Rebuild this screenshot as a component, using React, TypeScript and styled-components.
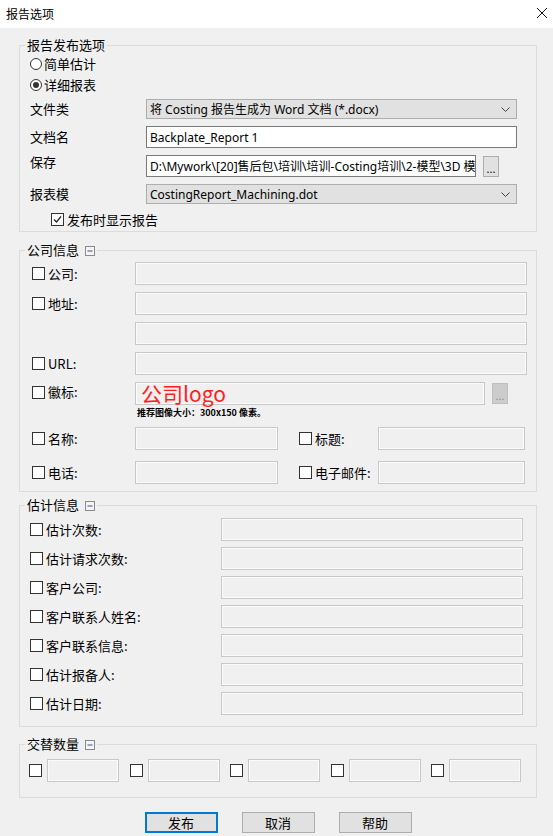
import React from 'react';
import styled, { createGlobalStyle } from 'styled-components';

const UI_FONT = `"Microsoft YaHei", "Noto Sans CJK SC", sans-serif`;
const FIELD_FONT = `"Segoe UI", "Noto Sans", "Noto Sans CJK SC", sans-serif`;

const GlobalStyle = createGlobalStyle`
  html, body {
    margin: 0;
    padding: 0;
    background: #f0f0f0;
  }
  * {
    box-sizing: border-box;
  }
`;

const COMPANY_ROWS = ['公司:', '地址:', '', 'URL:'];
const ESTIMATE_ROWS = ['估计次数:', '估计请求次数:', '客户公司:', '客户联系人姓名:', '客户联系信息:', '估计报备人:', '估计日期:'];
const ALT_COUNT = [0, 1, 2, 3, 4];

const CollapseIcon = () => (
  <svg width="10" height="10" viewBox="0 0 10 10">
    <rect x="0.5" y="0.5" width="9" height="9" fill="#f4f4f4" stroke="#8a8a8a" />
    <line x1="2.5" y1="5" x2="7.5" y2="5" stroke="#3452a4" />
  </svg>
);

const Chevron = () => (
  <svg width="9" height="5" viewBox="0 0 9 5">
    <path d="M0.5 0.5 L4.5 4.5 L8.5 0.5" fill="none" stroke="#444" />
  </svg>
);

const CheckBox = ({ checked }: { checked?: boolean }) => (
  <Check>
    {checked && (
      <svg width="11" height="11" viewBox="0 0 11 11">
        <path d="M2 5.5 L4.5 8 L9 2.5" fill="none" stroke="#222" strokeWidth="1.2" />
      </svg>
    )}
  </Check>
);

const App = () => {
  return (
    <Window>
      <GlobalStyle />
      <TitleBar>
        <span>报告选项</span>
        <svg width="10" height="10" viewBox="0 0 10 10">
          <path d="M0 0 L10 10 M10 0 L0 10" stroke="#111" strokeWidth="1" />
        </svg>
      </TitleBar>

      <Content>
        <Group>
          <Legend>报告发布选项</Legend>
          <Body $pad="0 19px 2px 10px">
            <OptionRow>
              <Radio />
              简单估计
            </OptionRow>
            <OptionRow>
              <Radio $checked />
              详细报表
            </OptionRow>

            <FormGrid>
              <Label>文件类</Label>
              <Select>
                <span>将 Costing 报告生成为 Word 文档 (*.docx)</span>
                <Chevron />
              </Select>

              <Label>文档名</Label>
              <TextBox>Backplate_Report 1</TextBox>

              <Label $top>保存</Label>
              <BrowseLine $right={18}>
                <TextBox>D:\Mywork\[20]售后包\培训\培训-Costing培训\2-模型\3D 模</TextBox>
                <Browse>...</Browse>
              </BrowseLine>

              <Label>报表模</Label>
              <Select>
                <span>CostingReport_Machining.dot</span>
                <Chevron />
              </Select>
            </FormGrid>

            <ShowRow>
              <CheckBox checked />
              发布时显示报告
            </ShowRow>
          </Body>
        </Group>

        <Group $mt={10}>
          <Legend>
            公司信息 <CollapseIcon />
          </Legend>
          <Body $pad="4px 9px 7px 12px">
            {COMPANY_ROWS.map((label, i) => (
              <FieldRow key={i} $labelWidth={103} $h={23}>
                {label ? (
                  <CheckLabel>
                    <CheckBox />
                    {label}
                  </CheckLabel>
                ) : (
                  <span />
                )}
                <Disabled />
              </FieldRow>
            ))}

            <FieldRow $labelWidth={103} $align="start">
              <CheckLabel $pt={2}>
                <CheckBox />
                徽标:
              </CheckLabel>
              <div>
                <BrowseLine $right={19}>
                  <Disabled>
                    <LogoText>公司logo</LogoText>
                  </Disabled>
                  <Browse $disabled>...</Browse>
                </BrowseLine>
                <Hint>推荐图像大小：300x150 像素。</Hint>
              </div>
            </FieldRow>

            <PairGrid>
              <CheckLabel>
                <CheckBox />
                名称:
              </CheckLabel>
              <Disabled />
              <CheckLabel $pl={21}>
                <CheckBox />
                标题:
              </CheckLabel>
              <Disabled />
            </PairGrid>
            <PairGrid $mt={4}>
              <CheckLabel>
                <CheckBox />
                电话:
              </CheckLabel>
              <Disabled />
              <CheckLabel $pl={21}>
                <CheckBox />
                电子邮件:
              </CheckLabel>
              <Disabled />
            </PairGrid>
          </Body>
        </Group>

        <Group $mt={5}>
          <Legend>
            估计信息 <CollapseIcon />
          </Legend>
          <Body $pad="5px 13px 12px 10px">
            {ESTIMATE_ROWS.map((label) => (
              <FieldRow key={label} $labelWidth={191} $h={22}>
                <CheckLabel>
                  <CheckBox />
                  {label}
                </CheckLabel>
                <Disabled />
              </FieldRow>
            ))}
          </Body>
        </Group>

        <Group $mt={9}>
          <Legend>
            交替数量 <CollapseIcon />
          </Legend>
          <AltBody>
            {ALT_COUNT.map((i) => (
              <AltItem key={i}>
                <CheckBox />
                <AltBox />
              </AltItem>
            ))}
          </AltBody>
        </Group>

        <Footer>
          <Button $primary>发布</Button>
          <Button>取消</Button>
          <Button>帮助</Button>
        </Footer>
      </Content>
    </Window>
  );
};

export default App;

const Window = styled.div`
  width: 553px;
  height: 836px;
  overflow: hidden;
  display: flex;
  flex-direction: column;
  background: #f0f0f0;
  color: #000;
  font-family: ${UI_FONT};
  font-size: 13px;
`;

const TitleBar = styled.div`
  height: 28px;
  flex-shrink: 0;
  display: flex;
  align-items: center;
  justify-content: space-between;
  padding: 0 6px 2px 6px;
  background: #fff;
  font-size: 12px;
`;

const Content = styled.div`
  display: flex;
  flex-direction: column;
  padding: 9px 16px 0 19px;
`;

const Group = styled.fieldset<{ $mt?: number }>`
  margin: ${({ $mt }) => $mt || 0}px 0 0 0;
  padding: 0;
  min-width: 0;
  border: 1px solid #dcdcdc;
`;

const Legend = styled.legend`
  height: 16px;
  margin-left: 5px;
  padding: 0 2px;
  line-height: 16px;
  font-size: 13px;

  svg {
    margin-left: 3px;
    vertical-align: -1px;
  }
`;

const Body = styled.div<{ $pad: string }>`
  display: flex;
  flex-direction: column;
  gap: 7px;
  padding: ${({ $pad }) => $pad};
`;

const OptionRow = styled.div`
  height: 21px;
  display: flex;
  align-items: center;
  gap: 2px;
  margin-bottom: -7px;
  line-height: 16px;
`;

const Radio = styled.span<{ $checked?: boolean }>`
  width: 12px;
  height: 12px;
  border-radius: 50%;
  border: 1px solid #333;
  background: #fff;
  display: inline-flex;
  align-items: center;
  justify-content: center;

  &::after {
    content: '';
    width: 6px;
    height: 6px;
    border-radius: 50%;
    background: ${({ $checked }) => ($checked ? '#333' : 'transparent')};
  }
`;

const FormGrid = styled.div`
  display: grid;
  grid-template-columns: 116px minmax(0, 1fr);
  row-gap: 7px;
  align-items: center;
  margin-top: 4px;
`;

const Label = styled.span<{ $top?: boolean }>`
  line-height: 16px;
  align-self: ${({ $top }) => ($top ? 'start' : 'center')};
  margin-top: ${({ $top }) => ($top ? '-1px' : '0')};
`;

const Select = styled.div`
  height: 20px;
  display: flex;
  align-items: center;
  justify-content: space-between;
  padding: 0 6px 0 3px;
  border: 1px solid #adadad;
  background: #e1e1e1;
  font-family: ${FIELD_FONT};
  font-size: 12px;
  white-space: nowrap;
  overflow: hidden;
`;

const TextBox = styled.div`
  flex: 1;
  min-width: 0;
  height: 22px;
  display: flex;
  align-items: center;
  padding: 0 3px;
  border: 1px solid #7a7a7a;
  background: #fff;
  font-family: ${FIELD_FONT};
  font-size: 12px;
  white-space: nowrap;
  overflow: hidden;
`;

const BrowseLine = styled.div<{ $right: number }>`
  display: flex;
  align-items: center;
  gap: 7px;
  min-width: 0;
  padding-right: ${({ $right }) => $right}px;
`;

const Browse = styled.div<{ $disabled?: boolean }>`
  width: 16px;
  height: 21px;
  flex-shrink: 0;
  display: flex;
  align-items: flex-end;
  justify-content: center;
  padding-bottom: 3px;
  border: 1px solid ${({ $disabled }) => ($disabled ? '#bfbfbf' : '#adadad')};
  background: ${({ $disabled }) => ($disabled ? '#cccccc' : '#e1e1e1')};
  color: ${({ $disabled }) => ($disabled ? '#9a8aa0' : '#000')};
  font-family: ${FIELD_FONT};
  font-size: 11px;
  line-height: 8px;
`;

const ShowRow = styled.div`
  height: 19px;
  display: flex;
  align-items: center;
  gap: 3px;
  margin: -1px 0 0 21px;
  line-height: 16px;
`;

const Check = styled.span`
  width: 13px;
  height: 13px;
  flex-shrink: 0;
  display: inline-flex;
  align-items: center;
  justify-content: center;
  border: 1px solid #333;
  background: #fff;
`;

const FieldRow = styled.div<{ $labelWidth: number; $h?: number; $align?: string }>`
  display: grid;
  grid-template-columns: ${({ $labelWidth }) => $labelWidth}px minmax(0, 1fr);
  align-items: ${({ $align }) => $align || 'center'};
  ${({ $h }) => ($h ? `height: ${$h}px;` : '')}
`;

const CheckLabel = styled.span<{ $pt?: number; $pl?: number }>`
  display: flex;
  align-items: center;
  gap: 3px;
  line-height: 16px;
  white-space: nowrap;
  padding-top: ${({ $pt }) => $pt || 0}px;
  padding-left: ${({ $pl }) => $pl || 0}px;
`;

const Disabled = styled.div`
  flex: 1;
  height: 23px;
  display: flex;
  align-items: center;
  border: 1px solid #c8c8c8;
  box-shadow: inset 0 0 0 1px #fbfbfb;
  background: #f0f0f0;
`;

const LogoText = styled.span`
  padding-left: 5px;
  color: #ff1f1f;
  font-size: 21px;
  line-height: 21px;
`;

const Hint = styled.div`
  height: 14px;
  margin-top: 1px;
  padding-left: 2px;
  font-size: 9px;
  font-weight: 600;
  line-height: 13px;
  white-space: nowrap;
`;

const PairGrid = styled.div<{ $mt?: number }>`
  display: grid;
  grid-template-columns: 103px 143px 100px 147px;
  align-items: center;
  height: 23px;
  margin-top: ${({ $mt }) => $mt || 0}px;
`;

const AltBody = styled.div`
  display: flex;
  gap: 10.5px;
  padding: 7px 0 15px 9px;
`;

const AltItem = styled.div`
  display: flex;
  align-items: center;
  gap: 5px;
`;

const AltBox = styled(Disabled)`
  flex: none;
  width: 72px;
`;

const Footer = styled.div`
  display: flex;
  justify-content: center;
  gap: 24px;
  margin-top: 14px;
`;

const Button = styled.div<{ $primary?: boolean }>`
  width: 73px;
  height: 21px;
  display: flex;
  align-items: center;
  justify-content: center;
  border: ${({ $primary }) => ($primary ? '2px solid #0078d7' : '1px solid #adadad')};
  background: #e1e1e1;
  font-size: 13px;
  line-height: 16px;
`;
